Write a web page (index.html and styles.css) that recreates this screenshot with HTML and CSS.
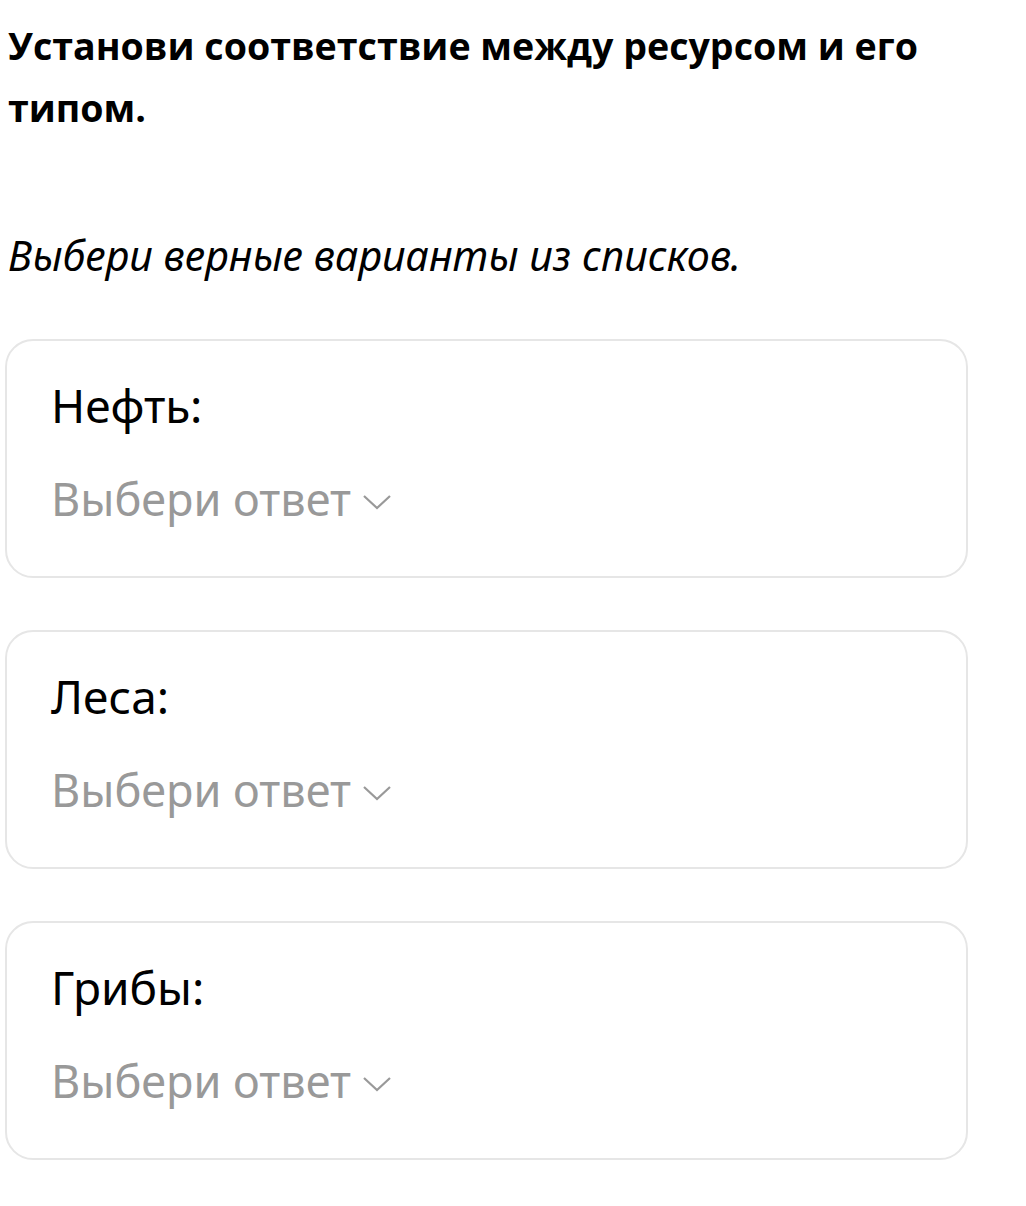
FILE: index.html
```html
<!DOCTYPE html>
<html lang="ru">
<head>
    <meta charset="UTF-8">
    <title>Установи соответствие</title>
    <link rel="stylesheet" href="styles.css">
</head>
<body>
    <h1 class="task-title">Установи соответствие между ресурсом и его типом.</h1>
    <p class="task-hint">Выбери верные варианты из списков.</p>

    <div class="match-list">
        <div class="match-card">
            <div class="match-label">Нефть:</div>
            <div class="match-select">Выбери ответ
                <svg class="chevron" viewBox="0 0 30 16" width="30" height="16"><path d="M2 2 L15 14 L28 2" fill="none" stroke="#999" stroke-width="2.2"/></svg>
            </div>
        </div>
        <div class="match-card">
            <div class="match-label">Леса:</div>
            <div class="match-select">Выбери ответ
                <svg class="chevron" viewBox="0 0 30 16" width="30" height="16"><path d="M2 2 L15 14 L28 2" fill="none" stroke="#999" stroke-width="2.2"/></svg>
            </div>
        </div>
        <div class="match-card">
            <div class="match-label">Грибы:</div>
            <div class="match-select">Выбери ответ
                <svg class="chevron" viewBox="0 0 30 16" width="30" height="16"><path d="M2 2 L15 14 L28 2" fill="none" stroke="#999" stroke-width="2.2"/></svg>
            </div>
        </div>
    </div>
</body>
</html>
```

FILE: styles.css
```css
body {
    margin: 0;
    padding: 0 58px 0 5px;
    background: #fff;
    color: #000;
    font-family: 'Noto Sans', 'Open Sans', sans-serif;
}
.task-title {
    font-family: 'Open Sans', sans-serif;
    font-weight: 700;
    font-size: 37.6px;
    line-height: 62px;
    margin: 15px 0 0 3px;
}
.task-hint {
    font-style: italic;
    font-size: 41.3px;
    line-height: 50px;
    margin: 91px 0 0 3px;
}
.match-list {
    display: flex;
    flex-direction: column;
    gap: 52px;
    margin-top: 59px;
}
.match-card {
    box-sizing: border-box;
    border: 2px solid #e6e6e6;
    border-radius: 28px;
    height: 239px;
    padding: 34px 44px 0;
}
.match-label {
    font-size: 46px;
    line-height: 60px;
}
.match-select {
    font-size: 45px;
    line-height: 60px;
    margin-top: 34px;
    color: #999;
    display: flex;
    align-items: center;
    gap: 11px;
}
.chevron {
    margin-top: 6px;
}
```
